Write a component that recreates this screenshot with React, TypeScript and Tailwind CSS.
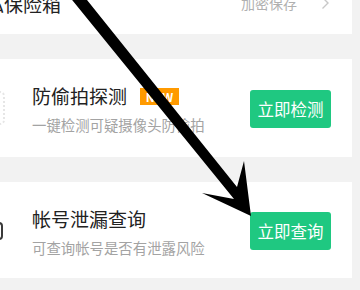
import React from 'react';

const font = { fontFamily: '"Noto Sans CJK SC", "Noto Sans", sans-serif' };

const ActionCard = ({ title, desc, action, badge, icon, tall }: { title: string; desc: string; action: string; badge?: boolean; icon?: React.ReactNode; tall?: boolean }) => (
    <div className={`relative bg-white flex items-start pl-[32px] pr-[21px] ${tall ? 'h-[98px]' : 'h-[96px]'}`}>
        {icon}
        <div className="flex-1 pt-[25px]">
            <div className="flex items-center h-[24px]">
                <span className="text-[19px] leading-[24px] text-[#222]">{title}</span>
                {badge && (
                    <span className="ml-[13px] w-[39px] h-[17px] bg-[#ff9a00] text-white text-[12px] leading-[17px] font-bold text-center">NEW</span>
                )}
            </div>
            <div className="mt-[7px] text-[14.4px] leading-[20px] text-[#a3a3a3]">{desc}</div>
        </div>
        <button className="self-center mt-[1px] w-[81px] h-[38px] rounded-[3px] bg-[#1fc881] text-white text-[16.5px] leading-[38px]">
            {action}
        </button>
    </div>
);

export default function App() {
    return (
        <div className="relative w-[360px] h-[290px] overflow-hidden bg-[#f2f2f2]" style={font}>
            <div className="flex flex-col gap-[25px] pr-[8px] -mt-[26px]">
                {/* carte du haut, coupée */}
                <div className="bg-white h-[60px] flex items-start pl-0 pr-[22px] pt-[18px]">
                    <span className="-ml-[34px] text-[19px] leading-[24px] text-[#222]">隐私保险箱</span>
                    <span className="ml-auto mt-[1px] text-[14px] leading-[20px] text-[#b0b0b0]">加密保存</span>
                    <svg className="ml-[24px] mt-[4px]" width="9" height="14" viewBox="0 0 9 14" fill="none">
                        <path d="M1.5 1.5 L7 7 L1.5 12.5" stroke="#c8c8c8" strokeWidth="1.4" />
                    </svg>
                </div>

                <ActionCard
                    title="防偷拍探测"
                    desc="一键检测可疑摄像头防偷拍"
                    action="立即检测"
                    badge
                    tall
                    icon={<div className="absolute -left-[22px] top-[32px] w-[27px] h-[34px] rounded-[5px] border-2 border-dotted border-[#e6e6e6]" />}
                />

                <ActionCard
                    title="帐号泄漏查询"
                    desc="可查询帐号是否有泄露风险"
                    action="立即查询"
                    icon={<div className="absolute -left-[22px] top-[40px] w-[25px] h-[18px] rounded-[4px] border-2 border-[#3a3a3a]" />}
                />
            </div>

            {/* flèche noire dessinée par-dessus */}
            <svg className="absolute inset-0 pointer-events-none" width="360" height="290" viewBox="0 0 360 290">
                <polygon
                    points="64,-10 79,-10 237,187 244,161 251,216 202,193 234,199"
                    fill="#000"
                />
            </svg>
        </div>
    );
}
